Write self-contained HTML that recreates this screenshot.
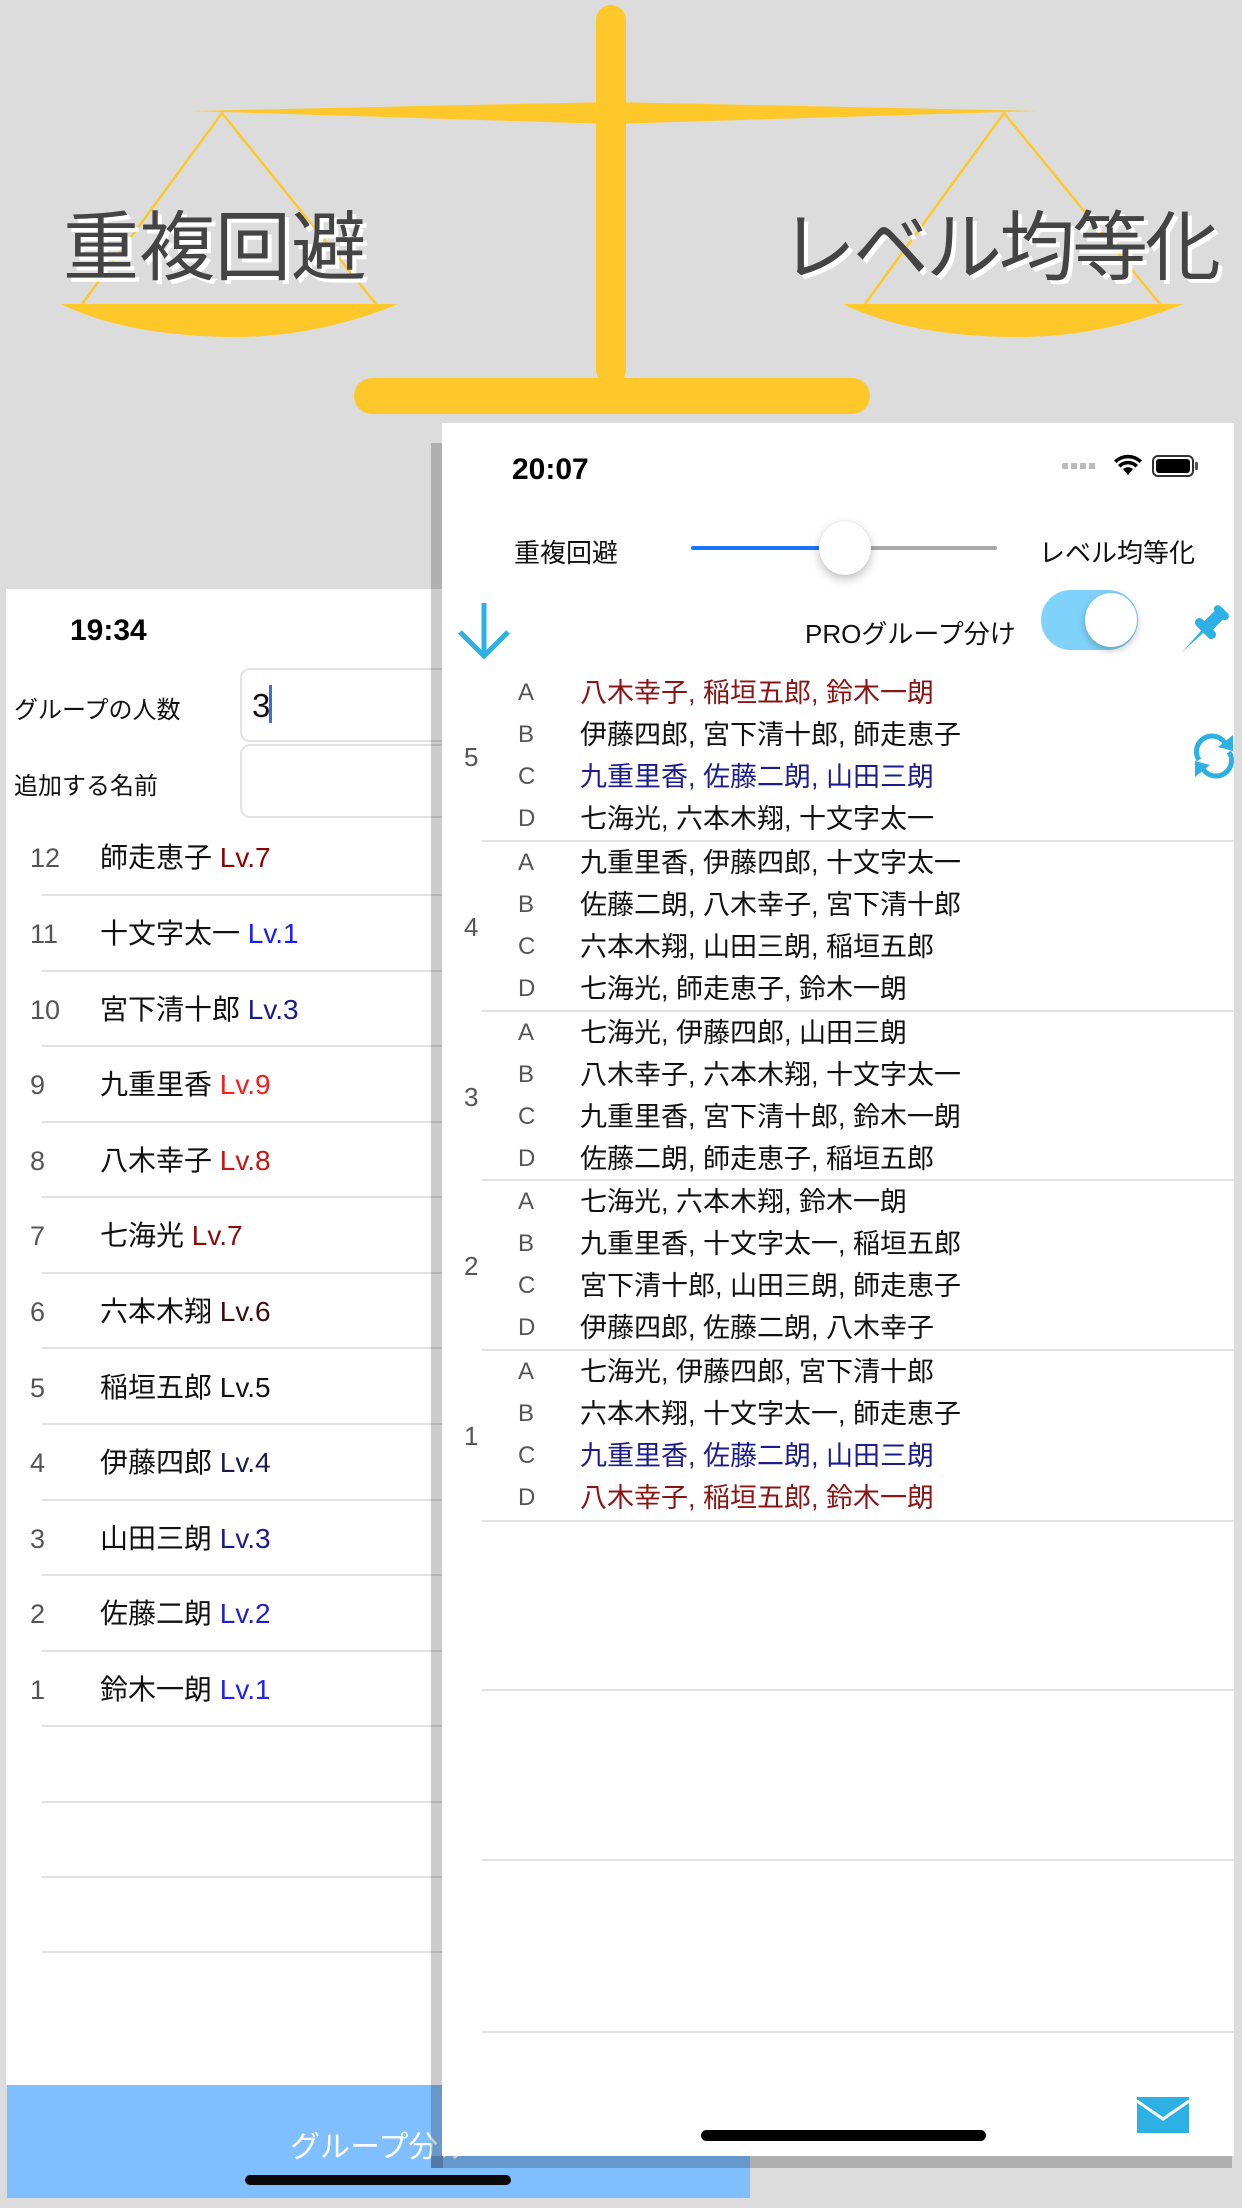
<!DOCTYPE html>
<html><head><meta charset="utf-8">
<style>
*{margin:0;padding:0;box-sizing:border-box}
body{width:1242px;height:2208px;background:#dcdcdc;position:relative;overflow:hidden;font-family:"Liberation Sans","Noto Sans CJK JP",sans-serif}
.a{position:absolute;white-space:nowrap}
.big{font-family:"Noto Sans CJK JP",sans-serif;font-size:76px;color:#444;text-shadow:4px 4px 0 #fff;line-height:1}
.sep{position:absolute;height:2px;background:#e2e2e2}
.lr{position:absolute;left:0;width:430px;height:76px;line-height:76px;font-size:28px;color:#111;white-space:nowrap}
.lr .n{position:absolute;left:30px;color:#555;font-family:"Liberation Sans",sans-serif;font-size:27px}
.lr .m{position:absolute;left:100px;white-space:nowrap}
.lv{font-family:"Liberation Sans",sans-serif}
.row{position:absolute;width:700px;height:42px;line-height:42px;font-size:27px;color:#111;white-space:nowrap}
.row .l{position:absolute;left:76px;color:#555;font-size:24px;font-family:"Liberation Sans",sans-serif}
.row .t{position:absolute;left:138px;white-space:nowrap}
.gn{position:absolute;left:22px;font-size:26px;color:#555;font-family:"Liberation Sans",sans-serif}
.red{color:#8b1414}.blu{color:#1c1c8c}
</style></head><body>

<svg class="a" style="left:0;top:0" width="1242" height="430" viewBox="0 0 1242 430">
<g fill="#fec82a">
<rect x="596" y="5" width="30" height="380" rx="15"/>
<polygon points="190,111 611,102 1038,111 611,124"/>
<rect x="354" y="378" width="516" height="36" rx="18"/>
<path d="M61 304 L398 304 C340 328 280 338 228 337 C170 336 110 328 61 304Z"/>
<path d="M843 304 L1183 304 C1125 328 1065 338 1010 337 C952 336 892 328 843 304Z"/>
</g>
<g stroke="#fec82a" stroke-width="2.5" fill="none">
<path d="M82 304 L222 113 L376 304"/>
<path d="M865 304 L1004 113 L1160 304"/>
</g>
</svg>
<div class="a big" style="left:63px;top:203px">重複回避</div>
<div class="a big" style="left:780px;top:203px;letter-spacing:-3px">レベル均等化</div>

<!-- left phone -->
<div class="a" style="left:6px;top:589px;width:440px;height:1496px;background:#fff"></div>
<div class="a" style="left:70px;top:614px;font-size:30px;font-weight:bold;color:#000">19:34</div>
<div class="a" style="left:14px;top:690px;font-size:24px;color:#111">グループの人数</div>
<div class="a" style="left:14px;top:766px;font-size:24px;color:#111">追加する名前</div>
<div class="a" style="left:240px;top:668px;width:260px;height:74px;border:2px solid #e3e3e3;border-radius:10px"></div>
<div class="a" style="left:240px;top:744px;width:260px;height:74px;border:2px solid #e3e3e3;border-radius:10px"></div>
<div class="a" style="left:252px;top:687px;font-size:33px;color:#111">3</div>
<div class="a" style="left:269px;top:685px;width:3px;height:38px;background:#3a6ee8"></div>

<div class="lr" style="top:820px"><span class="n">12</span><span class="m">師走恵子 <span class="lv" style="color:#8b0000">Lv.7</span></span></div>
<div class="lr" style="top:896px"><span class="n">11</span><span class="m">十文字太一 <span class="lv" style="color:#1a1aff">Lv.1</span></span></div>
<div class="lr" style="top:972px"><span class="n">10</span><span class="m">宮下清十郎 <span class="lv" style="color:#1a1a8c">Lv.3</span></span></div>
<div class="lr" style="top:1047px"><span class="n">9</span><span class="m">九重里香 <span class="lv" style="color:#ff1a1a">Lv.9</span></span></div>
<div class="lr" style="top:1123px"><span class="n">8</span><span class="m">八木幸子 <span class="lv" style="color:#c81414">Lv.8</span></span></div>
<div class="lr" style="top:1198px"><span class="n">7</span><span class="m">七海光 <span class="lv" style="color:#8b0a0a">Lv.7</span></span></div>
<div class="lr" style="top:1274px"><span class="n">6</span><span class="m">六本木翔 <span class="lv" style="color:#3a0a0a">Lv.6</span></span></div>
<div class="lr" style="top:1350px"><span class="n">5</span><span class="m">稲垣五郎 <span class="lv" style="color:#111">Lv.5</span></span></div>
<div class="lr" style="top:1425px"><span class="n">4</span><span class="m">伊藤四郎 <span class="lv" style="color:#1a1a4c">Lv.4</span></span></div>
<div class="lr" style="top:1501px"><span class="n">3</span><span class="m">山田三朗 <span class="lv" style="color:#1a1a8c">Lv.3</span></span></div>
<div class="lr" style="top:1576px"><span class="n">2</span><span class="m">佐藤二朗 <span class="lv" style="color:#2020c8">Lv.2</span></span></div>
<div class="lr" style="top:1652px"><span class="n">1</span><span class="m">鈴木一朗 <span class="lv" style="color:#1f1fff">Lv.1</span></span></div>

<div class="sep" style="left:42px;width:400px;top:894px"></div>
<div class="sep" style="left:42px;width:400px;top:970px"></div>
<div class="sep" style="left:42px;width:400px;top:1045px"></div>
<div class="sep" style="left:42px;width:400px;top:1121px"></div>
<div class="sep" style="left:42px;width:400px;top:1196px"></div>
<div class="sep" style="left:42px;width:400px;top:1272px"></div>
<div class="sep" style="left:42px;width:400px;top:1347px"></div>
<div class="sep" style="left:42px;width:400px;top:1423px"></div>
<div class="sep" style="left:42px;width:400px;top:1499px"></div>
<div class="sep" style="left:42px;width:400px;top:1574px"></div>
<div class="sep" style="left:42px;width:400px;top:1650px"></div>
<div class="sep" style="left:42px;width:400px;top:1725px"></div>
<div class="sep" style="left:42px;width:400px;top:1801px"></div>
<div class="sep" style="left:42px;width:400px;top:1876px"></div>
<div class="sep" style="left:42px;width:400px;top:1951px"></div>

<div class="a" style="left:7px;top:2085px;width:743px;height:113px;background:#80bfff"></div>
<div class="a" style="left:290px;top:2122px;font-size:30px;color:#fff">グループ分け</div>
<div class="a" style="left:245px;top:2175px;width:266px;height:10px;border-radius:5px;background:#0a0a0a"></div>

<!-- shadow of right phone -->
<div class="a" style="left:431px;top:443px;width:12px;height:1725px;background:rgba(0,0,0,0.2)"></div>
<div class="a" style="left:431px;top:2156px;width:801px;height:12px;background:rgba(0,0,0,0.2)"></div>

<!-- right phone -->
<div class="a" style="left:442px;top:423px;width:792px;height:1733px;background:#fff;overflow:hidden">
  <div class="a" style="left:70px;top:30px;font-size:30px;font-weight:bold;color:#000">20:07</div>
  <div class="a" style="left:620px;top:40px;width:35px;height:6px;background:repeating-linear-gradient(90deg,#bbb 0 6px,transparent 6px 9px);border-radius:2px"></div>
  <svg class="a" style="left:670px;top:30px" width="32" height="24" viewBox="0 0 32 24"><path d="M16 22 L11 16 A8 8 0 0 1 21 16Z M6 12 A14 14 0 0 1 26 12 L23.5 14.5 A10.5 10.5 0 0 0 8.5 14.5Z M2 7.5 A20 20 0 0 1 30 7.5 L27.5 10 A16.5 16.5 0 0 0 4.5 10Z" fill="#000"/></svg>
  <div class="a" style="left:710px;top:32px;width:42px;height:22px;border:2px solid #333;border-radius:6px;padding:2px"><div style="width:100%;height:100%;background:#000;border-radius:3px"></div></div>
  <div class="a" style="left:753px;top:39px;width:3px;height:8px;background:#555;border-radius:1px"></div>

  <div class="a" style="left:72px;top:110px;font-size:26px;color:#111">重複回避</div>
  <div class="a" style="left:249px;top:123px;width:154px;height:4px;background:#1a73ff;border-radius:2px"></div>
  <div class="a" style="left:403px;top:123px;width:152px;height:4px;background:#aaa;border-radius:2px"></div>
  <div class="a" style="left:377px;top:98px;width:52px;height:54px;border-radius:50%;background:#fff;box-shadow:0 4px 10px rgba(0,0,0,0.25),0 0 1px rgba(0,0,0,0.2)"></div>
  <div class="a" style="left:597px;top:110px;font-size:26px;color:#111">レベル均等化</div>

  <svg class="a" style="left:14px;top:178px" width="56" height="60" viewBox="0 0 56 60"><path d="M28 2 V54 M4 31 L28 55 L52 31" stroke="#2db0e3" stroke-width="5" fill="none"/></svg>
  <div class="a" style="left:363px;top:191px;font-size:26px;color:#111">PROグループ分け</div>
  <div class="a" style="left:599px;top:167px;width:97px;height:60px;border-radius:30px;background:#7fd3fb"></div>
  <div class="a" style="left:643px;top:170px;width:52px;height:54px;border-radius:50%;background:#fff;box-shadow:0 3px 8px rgba(0,0,0,0.25)"></div>
  <svg class="a" style="left:733px;top:180px" width="56" height="56" viewBox="0 0 56 56"><g fill="#2db0e3" transform="rotate(45 28 28)"><rect x="19" y="-2" width="18" height="8" rx="4"/><rect x="22" y="4" width="12" height="18"/><rect x="15" y="20" width="26" height="9" rx="4.5"/><path d="M26.5 29 L29.5 29 L28 58 Z"/></g></svg>
  <svg class="a" style="left:750px;top:310px" width="44" height="46" viewBox="0 0 44 46"><g fill="none" stroke="#2db0e3" stroke-width="5"><path d="M7 27 A15 15 0 0 1 33 10"/><path d="M37 19 A15 15 0 0 1 11 36"/></g><g fill="#2db0e3"><path d="M41 2 L41 18 L26 14 Z"/><path d="M3 44 L3 28 L18 32 Z"/></g></svg>

  <div class="a" style="left:0;top:249px;width:792px;height:170px">
    <div class="gn" style="top:70px">5</div>
    <div class="row" style="top:0"><span class="l">A</span><span class="t red">八木幸子, 稲垣五郎, 鈴木一朗</span></div>
    <div class="row" style="top:42px"><span class="l">B</span><span class="t">伊藤四郎, 宮下清十郎, 師走恵子</span></div>
    <div class="row" style="top:84px"><span class="l">C</span><span class="t blu">九重里香, 佐藤二朗, 山田三朗</span></div>
    <div class="row" style="top:126px"><span class="l">D</span><span class="t">七海光, 六本木翔, 十文字太一</span></div>
  </div>
  <div class="a" style="left:0;top:419px;width:792px;height:170px">
    <div class="gn" style="top:70px">4</div>
    <div class="row" style="top:0"><span class="l">A</span><span class="t">九重里香, 伊藤四郎, 十文字太一</span></div>
    <div class="row" style="top:42px"><span class="l">B</span><span class="t">佐藤二朗, 八木幸子, 宮下清十郎</span></div>
    <div class="row" style="top:84px"><span class="l">C</span><span class="t">六本木翔, 山田三朗, 稲垣五郎</span></div>
    <div class="row" style="top:126px"><span class="l">D</span><span class="t">七海光, 師走恵子, 鈴木一朗</span></div>
  </div>
  <div class="a" style="left:0;top:589px;width:792px;height:170px">
    <div class="gn" style="top:70px">3</div>
    <div class="row" style="top:0"><span class="l">A</span><span class="t">七海光, 伊藤四郎, 山田三朗</span></div>
    <div class="row" style="top:42px"><span class="l">B</span><span class="t">八木幸子, 六本木翔, 十文字太一</span></div>
    <div class="row" style="top:84px"><span class="l">C</span><span class="t">九重里香, 宮下清十郎, 鈴木一朗</span></div>
    <div class="row" style="top:126px"><span class="l">D</span><span class="t">佐藤二朗, 師走恵子, 稲垣五郎</span></div>
  </div>
  <div class="a" style="left:0;top:758px;width:792px;height:170px">
    <div class="gn" style="top:70px">2</div>
    <div class="row" style="top:0"><span class="l">A</span><span class="t">七海光, 六本木翔, 鈴木一朗</span></div>
    <div class="row" style="top:42px"><span class="l">B</span><span class="t">九重里香, 十文字太一, 稲垣五郎</span></div>
    <div class="row" style="top:84px"><span class="l">C</span><span class="t">宮下清十郎, 山田三朗, 師走恵子</span></div>
    <div class="row" style="top:126px"><span class="l">D</span><span class="t">伊藤四郎, 佐藤二朗, 八木幸子</span></div>
  </div>
  <div class="a" style="left:0;top:928px;width:792px;height:170px">
    <div class="gn" style="top:70px">1</div>
    <div class="row" style="top:0"><span class="l">A</span><span class="t">七海光, 伊藤四郎, 宮下清十郎</span></div>
    <div class="row" style="top:42px"><span class="l">B</span><span class="t">六本木翔, 十文字太一, 師走恵子</span></div>
    <div class="row" style="top:84px"><span class="l">C</span><span class="t blu">九重里香, 佐藤二朗, 山田三朗</span></div>
    <div class="row" style="top:126px"><span class="l">D</span><span class="t red">八木幸子, 稲垣五郎, 鈴木一朗</span></div>
  </div>
  <div class="sep" style="left:40px;width:760px;top:417px"></div>
  <div class="sep" style="left:40px;width:760px;top:587px"></div>
  <div class="sep" style="left:40px;width:760px;top:756px"></div>
  <div class="sep" style="left:40px;width:760px;top:926px"></div>
  <div class="sep" style="left:40px;width:760px;top:1097px"></div>
  <div class="sep" style="left:40px;width:760px;top:1266px"></div>
  <div class="sep" style="left:40px;width:760px;top:1436px"></div>
  <div class="sep" style="left:40px;width:760px;top:1608px"></div>

  <div class="a" style="left:259px;top:1707px;width:285px;height:11px;border-radius:6px;background:#000"></div>
  <svg class="a" style="left:695px;top:1674px" width="52" height="36" viewBox="0 0 52 36"><rect width="52" height="36" fill="#2db0e3"/><path d="M0 4 L26 22 L52 4" stroke="#fff" stroke-width="3" fill="none"/></svg>
</div>
</body></html>
